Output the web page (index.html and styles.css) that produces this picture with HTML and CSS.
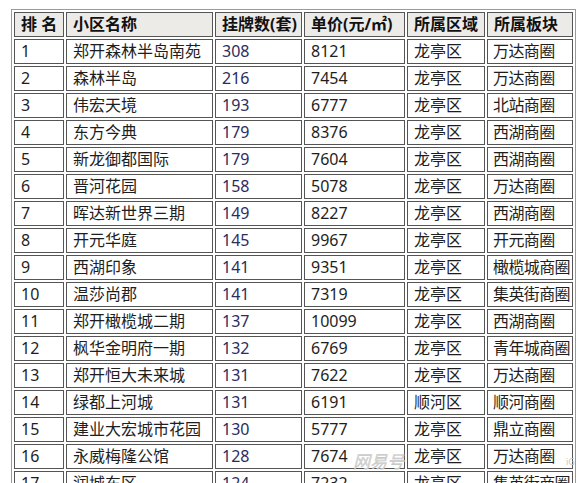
FILE: index.html
```html
<!DOCTYPE html>
<html lang="zh-CN">
<head>
<meta charset="utf-8">
<title>挂牌数排行</title>
<link rel="stylesheet" href="styles.css">
</head>
<body>
<div class="wrap">
<table class="rank">
  <colgroup>
    <col class="c1"><col class="c2"><col class="c3"><col class="c4"><col class="c5"><col class="c6">
  </colgroup>
  <thead>
    <tr><th>排 名</th><th>小区名称</th><th>挂牌数(套)</th><th>单价(元/㎡)</th><th>所属区域</th><th>所属板块</th></tr>
  </thead>
  <tbody>
    <tr><td>1</td><td>郑开森林半岛南苑</td><td class="num">308</td><td>8121</td><td>龙亭区</td><td>万达商圈</td></tr>
    <tr><td>2</td><td>森林半岛</td><td class="num">216</td><td>7454</td><td>龙亭区</td><td>万达商圈</td></tr>
    <tr><td>3</td><td>伟宏天境</td><td class="num">193</td><td>6777</td><td>龙亭区</td><td>北站商圈</td></tr>
    <tr><td>4</td><td>东方今典</td><td class="num">179</td><td>8376</td><td>龙亭区</td><td>西湖商圈</td></tr>
    <tr><td>5</td><td>新龙御都国际</td><td class="num">179</td><td>7604</td><td>龙亭区</td><td>西湖商圈</td></tr>
    <tr><td>6</td><td>晋河花园</td><td class="num">158</td><td>5078</td><td>龙亭区</td><td>万达商圈</td></tr>
    <tr><td>7</td><td>晖达新世界三期</td><td class="num">149</td><td>8227</td><td>龙亭区</td><td>西湖商圈</td></tr>
    <tr><td>8</td><td>开元华庭</td><td class="num">145</td><td>9967</td><td>龙亭区</td><td>开元商圈</td></tr>
    <tr><td>9</td><td>西湖印象</td><td class="num">141</td><td>9351</td><td>龙亭区</td><td>橄榄城商圈</td></tr>
    <tr><td>10</td><td>温莎尚郡</td><td class="num">141</td><td>7319</td><td>龙亭区</td><td>集英街商圈</td></tr>
    <tr><td>11</td><td>郑开橄榄城二期</td><td class="num">137</td><td>10099</td><td>龙亭区</td><td>西湖商圈</td></tr>
    <tr><td>12</td><td>枫华金明府一期</td><td class="num">132</td><td>6769</td><td>龙亭区</td><td>青年城商圈</td></tr>
    <tr><td>13</td><td>郑开恒大未来城</td><td class="num">131</td><td>7622</td><td>龙亭区</td><td>万达商圈</td></tr>
    <tr><td>14</td><td>绿都上河城</td><td class="num">131</td><td>6191</td><td>顺河区</td><td>顺河商圈</td></tr>
    <tr><td>15</td><td>建业大宏城市花园</td><td class="num">130</td><td>5777</td><td>龙亭区</td><td>鼎立商圈</td></tr>
    <tr><td>16</td><td>永威梅隆公馆</td><td class="num">128</td><td>7674</td><td>龙亭区</td><td>万达商圈</td></tr>
    <tr><td>17</td><td>润城东区</td><td class="num">124</td><td>7232</td><td>龙亭区</td><td>集英街商圈</td></tr>
  </tbody>
</table>
<span class="mark">网易号</span>
<span class="mark-small">iG</span>
</div>
</body>
</html>
```
FILE: styles.css
```css
html, body {
  margin: 0;
  padding: 0;
  background: #ffffff;
}
body {
  padding: 9px 0 0 11px;
  font-family: "Noto Sans", "Noto Sans CJK SC", sans-serif;
  font-size: 16px;
  color: #1e1e1e;
}
.wrap {
  position: relative;
  width: 565px;
}
.rank {
  border-collapse: separate;
  border-spacing: 2px;
  border: 1px solid #9a9a9a;
  table-layout: fixed;
  width: 565px;
}
.c1 { width: 50px; }
.c2 { width: 147px; }
.c3 { width: 87px; }
.c4 { width: 101px; }
.c5 { width: 78px; }
.c6 { width: 86px; }
.rank th,
.rank td {
  border: 1px solid #555555;
  padding: 0 0 0 6px;
  height: 23px;
  line-height: 23px;
  text-align: left;
  white-space: nowrap;
  overflow: visible;
  box-sizing: content-box;
}
.rank td:last-child {
  padding-left: 5px;
  letter-spacing: -0.6px;
}
.rank th {
  background: #ecebe8;
  font-weight: bold;
  font-size: 16px;
  color: #111111;
}
.rank td.num {
  color: #2c2c5e;
}
.mark {
  position: absolute;
  left: 342px;
  top: 439px;
  font-size: 17px;
  font-style: italic;
  color: #d4d4d4;
  letter-spacing: 0;
  -webkit-text-stroke: 0.3px #bdbdbd;
}
.mark-small {
  position: absolute;
  left: 555px;
  top: 446px;
  font-size: 9px;
  color: #c8c8c8;
}
```
